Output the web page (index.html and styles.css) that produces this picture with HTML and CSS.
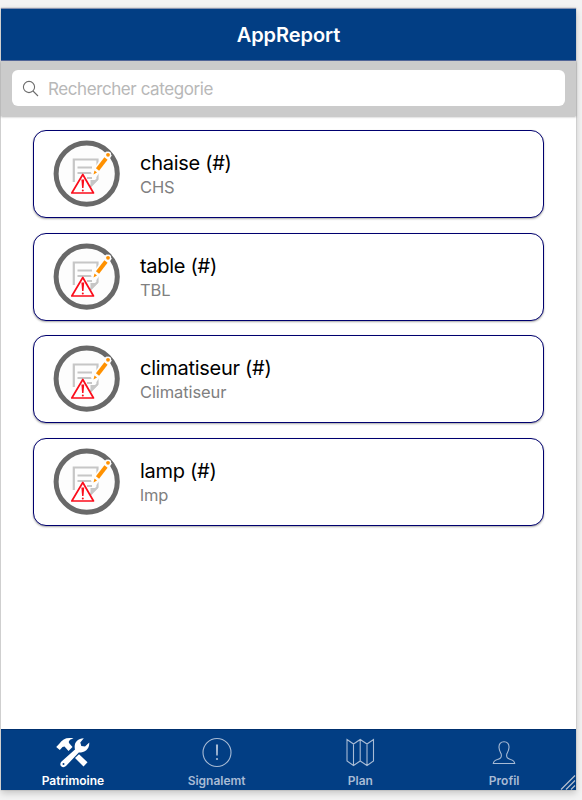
FILE: index.html
```html
<!DOCTYPE html>
<html lang="fr">
<head>
    <meta charset="UTF-8">
    <meta name="viewport" content="width=device-width, initial-scale=1.0">
    <title>AppReport</title>
    <link rel="stylesheet" href="styles.css">
</head>
<body>
    <!-- shared category icon -->
    <svg class="defs" width="0" height="0">
        <symbol id="report" viewBox="0 0 68 68">
            <circle cx="33.700" cy="33.700" r="30.600" fill="#fdfdfd" stroke="#696969" stroke-width="5"/>
            <path d="M20.800 42V19.500H44.500V39L37 47H34" fill="none" stroke="#c6c6c6" stroke-width="2.200"/>
            <path d="M37.500 47V40H45Z" fill="#c6c6c6"/>
            <path d="M24.500 27.500H39M24.500 33H39M34 38H39" stroke="#c6c6c6" stroke-width="2"/>
            <path d="M40.500 35L56 13.500" stroke="#fdfdfd" stroke-width="7"/>
            <path d="M44.500 29.500L53 18.500" stroke="#ff9100" stroke-width="4"/>
            <path d="M40.500 34.500L41.500 30.500L44 32.500Z" fill="#ff9100"/>
            <circle cx="55" cy="14.800" r="3.200" fill="#fdfdfd"/>
            <circle cx="55" cy="14.800" r="1.900" fill="#ff9100"/>
            <path d="M29.800 34.500L40.500 53H18.800Z" fill="#fff" stroke="#fb0d1b" stroke-width="1.700" stroke-linejoin="round"/>
            <path d="M28.400 39.500H31.200L30.500 48H29.100Z" fill="#fb0d1b"/>
            <circle cx="29.800" cy="50.400" r="1" fill="#fb0d1b"/>
        </symbol>
    </svg>

    <div class="app">
        <header class="header">
            <h1>AppReport</h1>
        </header>
        <div class="search">
            <div class="search-box">
                <svg width="18" height="18" viewBox="0 0 18 18">
                    <circle cx="7" cy="7" r="5.600"/>
                    <path d="M11 11L16 16"/>
                </svg>
                <span>Rechercher categorie</span>
            </div>
        </div>

        <main class="list">
            <div class="card">
                <svg class="card-icon"><use href="#report"/></svg>
                <div class="card-text">
                    <h2>chaise (#)</h2>
                    <p>CHS</p>
                </div>
            </div>
            <div class="card">
                <svg class="card-icon"><use href="#report"/></svg>
                <div class="card-text">
                    <h2>table (#)</h2>
                    <p>TBL</p>
                </div>
            </div>
            <div class="card">
                <svg class="card-icon"><use href="#report"/></svg>
                <div class="card-text">
                    <h2>climatiseur (#)</h2>
                    <p>Climatiseur</p>
                </div>
            </div>
            <div class="card">
                <svg class="card-icon"><use href="#report"/></svg>
                <div class="card-text">
                    <h2>lamp (#)</h2>
                    <p>lmp</p>
                </div>
            </div>
        </main>

        <nav class="tabs">
            <div class="tab active">
                <svg width="36" height="32" viewBox="0 0 36 32">
                    <path class="solid" d="M1.200 11L4.500 7.500C7.500 3 12 1 18.500 2.500C14.500 3.500 13.500 5 14 7L17.500 11L13.500 15L9.500 10.500L7.500 11L4.800 14Z"/>
                    <path class="solid" d="M20 22L24 18.200L32.500 26.200L28.500 30.500Z"/>
                    <path class="solid" d="M6.500 25.500L20 13.500C18.500 7 22 2.500 28.800 2.200L25.300 6.500L26.300 10L30 10.500L34.300 6.500C34.500 13 30 16.500 23.800 16.500L11 30C8 33 3 29.500 6.500 25.500Z"/>
                    <circle class="hole" cx="8.500" cy="28" r="1"/>
                </svg>
                <span>Patrimoine</span>
            </div>
            <div class="tab">
                <svg width="36" height="32" viewBox="0 0 36 32">
                    <circle cx="18" cy="16.500" r="14"/>
                    <path d="M17.500 9H18.500L18.300 19H17.700Z"/>
                    <circle class="dot" cx="18" cy="23" r="1.100"/>
                </svg>
                <span>Signalemt</span>
            </div>
            <div class="tab">
                <svg width="36" height="32" viewBox="0 0 36 32">
                    <path d="M5 3.500L11.500 8L18.200 3.500L25 8L31.500 3.500V25L25 29.500L18.200 25L11.500 29.500L5 25ZM11.500 8V29.500M18.200 3.500V25M25 8V29.500"/>
                </svg>
                <span>Plan</span>
            </div>
            <div class="tab">
                <svg width="36" height="32" viewBox="0 0 36 32">
                    <path d="M18 5.800C14.500 5.800 12.800 8 13 11.500C13.200 15 14.500 16.500 15.200 18C16 22 14 22.700 11.500 23.500C9 24.200 7.600 25.200 7.300 27.500H28.700C28.400 25.200 27 24.200 24.500 23.500C22 22.700 20 22 20.800 18C21.500 16.500 22.800 15 23 11.500C23.200 8 21.500 5.800 18 5.800Z"/>
                </svg>
                <span>Profil</span>
            </div>
            <svg class="grip" width="16" height="16" viewBox="0 0 16 16">
                <path d="M1 15.500L15 1.500M6 15.500L15 6.500M11 15.500L15 11.500"/>
            </svg>
        </nav>
    </div>
</body>
</html>
```
FILE: styles.css
```css
* {
    box-sizing: border-box;
}

body {
    margin: 0;
    height: 800px;
    padding: 8px 6px 10px 1px;
    background-color: #f3f3f3;
    font-family: Inter, "Liberation Sans", sans-serif;
    overflow: hidden;
}

.defs {
    position: absolute;
}

.app {
    display: flex;
    flex-direction: column;
    height: 782px;
    background-color: #fff;
    box-shadow: 0 0 1px #888, 0 3px 7px rgba(0, 0, 0, 0.2);
}

.header {
    display: flex;
    align-items: center;
    justify-content: center;
    height: 53px;
    background-color: #023e84;
    border-top: 1px solid #8491b0;
    border-bottom: 1px solid #53689b;
}

.header h1 {
    margin: 0;
    color: #fff;
    font-size: 20px;
    font-weight: 600;
    letter-spacing: -0.05px;
}

.search {
    height: 55px;
    padding: 9px 11px 0;
    background-color: #cbcbcb;
    box-shadow: 0 1px 2px rgba(0, 0, 0, 0.3);
}

.search-box {
    display: flex;
    align-items: center;
    gap: 8px;
    height: 36px;
    padding-left: 10px;
    background-color: #fff;
    border-radius: 6px;
}

.search-box svg {
    margin-top: 1px;
    fill: none;
    stroke: #6c6c6c;
    stroke-width: 1.1;
}

.search-box span {
    padding-top: 2px;
    color: #b8b8b8;
    font-size: 17px;
    letter-spacing: -0.42px;
}

.list {
    display: flex;
    flex: 1;
    flex-direction: column;
    gap: 14.6px;
    padding: 14px 32px 0;
}

.card {
    display: flex;
    align-items: center;
    gap: 19px;
    height: 88px;
    padding-left: 19px;
    border: 1px solid #00006f;
    border-radius: 13px;
    background-color: #fff;
    box-shadow: 0 1px 2px rgba(0, 0, 0, 0.35);
}

.card-icon {
    width: 68px;
    height: 68px;
}

.card-text {
    padding-top: 3px;
}

.card-text h2 {
    margin: 0;
    color: #000;
    font-size: 20px;
    font-weight: 400;
    letter-spacing: -0.28px;
    line-height: 24px;
}

.card-text p {
    margin: 0;
    color: #808080;
    font-size: 16.5px;
    letter-spacing: -0.1px;
    line-height: 25px;
}

.tabs {
    position: relative;
    display: flex;
    height: 61px;
    background-color: #023e84;
    border-top: 1px solid #00306f;
}

.tab {
    display: flex;
    flex: 1;
    flex-direction: column;
    align-items: center;
    padding-top: 6px;
    color: #a8bbd5;
    font-size: 12px;
    font-weight: 600;
    line-height: 16px;
}

.tab svg {
    margin-bottom: 5px;
    fill: none;
    stroke: currentColor;
    stroke-width: 1.1;
}

.tab .solid {
    fill: currentColor;
    stroke: none;
}

.tab .dot {
    fill: currentColor;
    stroke: none;
}

.tab .hole {
    fill: #023e84;
    stroke: none;
}

.tab.active {
    color: #fff;
}

/* window resize handle, drawn over the last tab */
.grip {
    position: absolute;
    right: 0;
    bottom: 0;
    fill: none;
    stroke: #b5bfce;
    stroke-width: 1.2;
}
```
